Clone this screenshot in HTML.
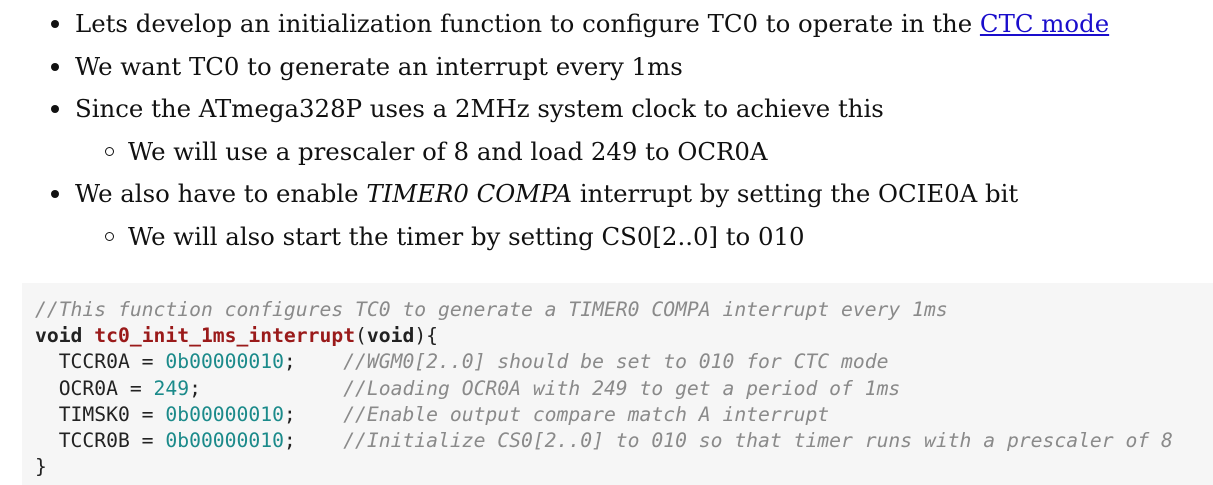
<!DOCTYPE html>
<html><head><meta charset="utf-8"><style>
body{margin:0;width:1213px;height:485px;background:#fff;overflow:hidden;}
.t{font-family:"DejaVu Serif",serif;font-size:24.4px;color:#111;position:absolute;white-space:nowrap;}
.b{position:absolute;width:8px;height:8px;border-radius:50%;background:#111;}
.c{position:absolute;width:7px;height:7px;border-radius:50%;border:1.5px solid #111;}
a{color:#1a0dcc;text-decoration:underline;}
pre{position:absolute;left:22px;top:283px;width:1191px;height:202px;margin:0;background:#f6f6f6;font-family:"DejaVu Sans Mono",monospace;font-size:19.7px;line-height:26.2px;padding:14px 0 0 13px;box-sizing:border-box;color:#222;}
.cm{color:#8a8a8a;font-style:italic}
.fn{color:#9a1a1a;font-weight:bold}
.k{font-weight:bold}
.n{color:#1b8a8a}
</style></head><body>
<div class="b" style="left:51px;top:20px"></div><div class="t" style="left:75px;top:9px">Lets develop an initialization function to configure TC0 to operate in the <a>CTC mode</a></div>
<div class="b" style="left:51px;top:63px"></div><div class="t" style="left:75px;top:52px">We want TC0 to generate an interrupt every 1ms</div>
<div class="b" style="left:51px;top:105px"></div><div class="t" style="left:75px;top:94px">Since the ATmega328P uses a 2MHz system clock to achieve this</div>
<div class="c" style="left:105px;top:147px"></div><div class="t" style="left:128px;top:137px">We will use a prescaler of 8 and load 249 to OCR0A</div>
<div class="b" style="left:51px;top:190px"></div><div class="t" style="left:75px;top:179px">We also have to enable <i>TIMER0 COMPA</i> interrupt by setting the OCIE0A bit</div>
<div class="c" style="left:105px;top:232px"></div><div class="t" style="left:128px;top:222px">We will also start the timer by setting CS0[2..0] to 010</div>
<pre><span class="cm">//This function configures TC0 to generate a TIMER0 COMPA interrupt every 1ms</span>
<span class="k">void</span> <span class="fn">tc0_init_1ms_interrupt</span>(<span class="k">void</span>){
  TCCR0A = <span class="n">0b00000010</span>;    <span class="cm">//WGM0[2..0] should be set to 010 for CTC mode</span>
  OCR0A = <span class="n">249</span>;            <span class="cm">//Loading OCR0A with 249 to get a period of 1ms</span>
  TIMSK0 = <span class="n">0b00000010</span>;    <span class="cm">//Enable output compare match A interrupt</span>
  TCCR0B = <span class="n">0b00000010</span>;    <span class="cm">//Initialize CS0[2..0] to 010 so that timer runs with a prescaler of 8</span>
}</pre>
</body></html>
